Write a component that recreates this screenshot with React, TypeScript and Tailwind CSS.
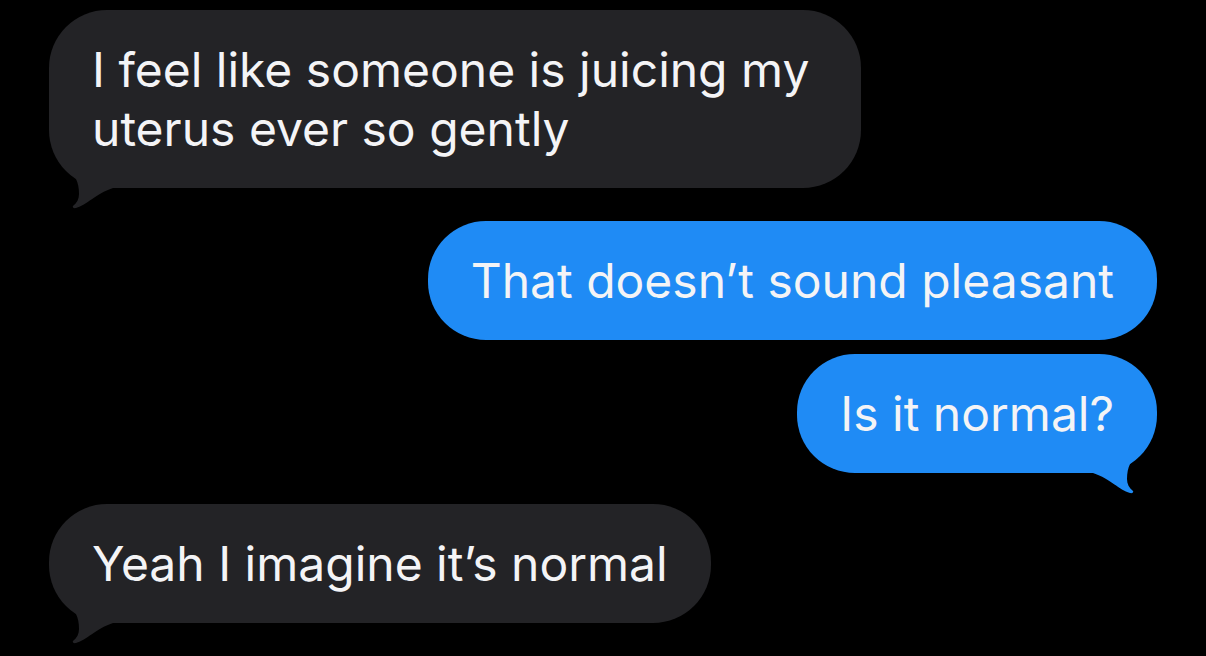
import React from 'react'

type Side = 'left' | 'right'

interface BubbleProps {
  side: Side
  tail?: boolean
  className?: string
  children: React.ReactNode
}

// iMessage tail, drawn for the left side and mirrored for the right
function Tail({ side, color }: { side: Side; color: string }) {
  return (
    <svg
      width="66"
      height="52"
      viewBox="0 0 66 52"
      className={
        side === 'left'
          ? 'absolute left-0 bottom-[-22px]'
          : 'absolute right-0 bottom-[-22px] -scale-x-100'
      }
    >
      <path
        d="M16,8 L27,21 C29,25 30,30 30,36 C30,41 28,45 24,48 C23,49.5 25,50.5 27,50 C38,47 46,36 64,30 L64,8 Z"
        fill={color}
      />
    </svg>
  )
}

function Bubble({ side, tail, className, children }: BubbleProps) {
  const color = side === 'left' ? '#232326' : '#1f8bf5'
  return (
    <div className={`flex ${side === 'left' ? 'justify-start' : 'justify-end'} ${className ?? ''}`}>
      <div
        className={`relative rounded-[58px] px-[43px] py-[30px] text-[48px] leading-[59px] text-[#f4f4f6] ${
          side === 'left' ? 'bg-[#232326]' : 'bg-[#1f8bf5]'
        }`}
      >
        {tail && <Tail side={side} color={color} />}
        <span className="relative">{children}</span>
      </div>
    </div>
  )
}

export default function App() {
  return (
    <div
      className="w-[1206px] h-[656px] overflow-hidden bg-black px-[49px] pt-[10px] flex flex-col"
      style={{ fontFamily: 'Inter, "Noto Sans", sans-serif' }}
    >
      <Bubble side="left" tail className="max-w-[812px]">
        I feel like someone is juicing my uterus ever so gently
      </Bubble>
      <Bubble side="right" className="mt-[33px]">
        That doesn’t sound pleasant
      </Bubble>
      <Bubble side="right" tail className="mt-[14px]">
        Is it normal?
      </Bubble>
      <Bubble side="left" tail className="mt-[31px]">
        Yeah I imagine it’s normal
      </Bubble>
    </div>
  )
}
